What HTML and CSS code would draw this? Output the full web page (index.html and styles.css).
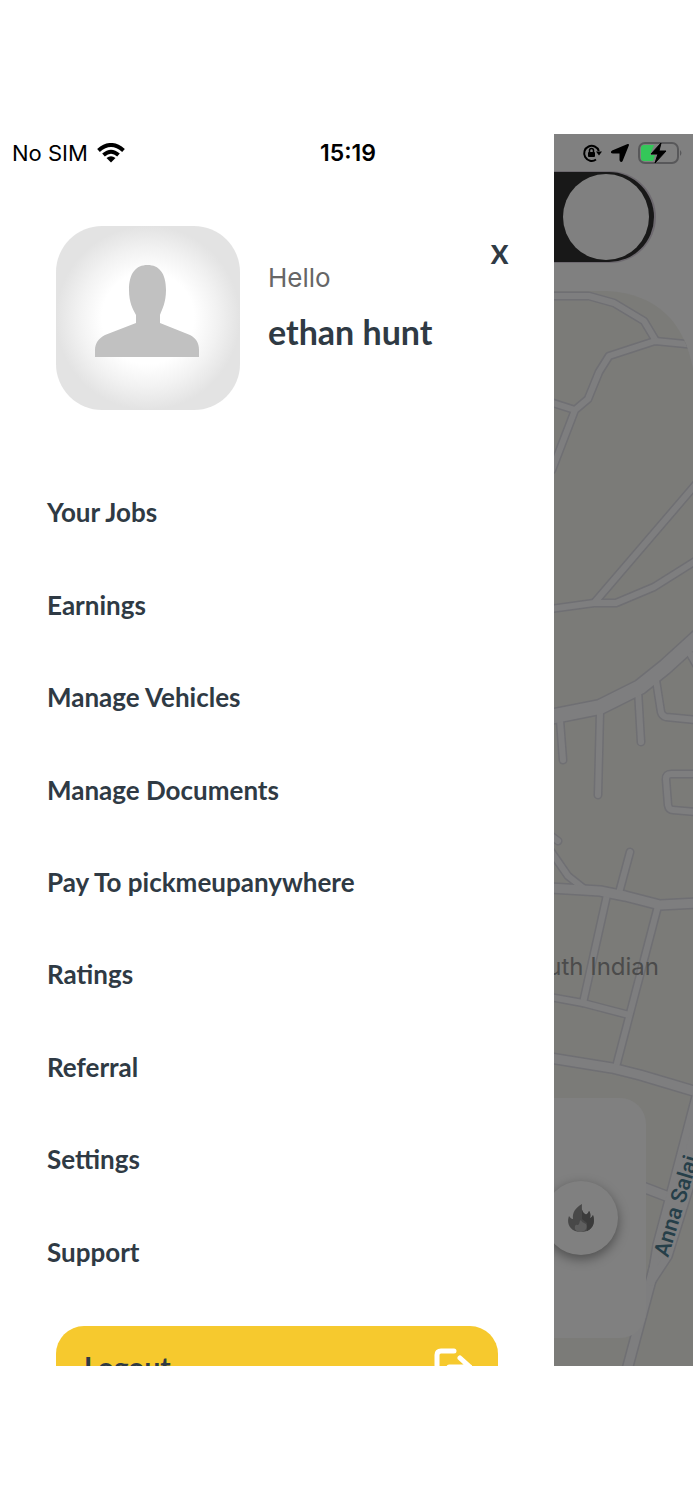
FILE: index.html
```
<!DOCTYPE html>
<html lang="en">
<head>
    <meta charset="UTF-8">
    <meta name="viewport" content="width=device-width, initial-scale=1.0">
    <title>Menu</title>
    <link rel="stylesheet" href="styles.css">
</head>
<body>

<div class="phone">

    <!-- Drawer -->
    <aside class="drawer">
        <header class="profile">
            <svg class="avatar" viewBox="0 0 184 184" aria-hidden="true">
                <defs>
                    <radialGradient id="glow" cx="0.5" cy="0.5" r="0.5">
                        <stop offset="0.5" stop-color="#ffffff"/>
                        <stop offset="0.75" stop-color="#f2f2f2"/>
                        <stop offset="1" stop-color="#e3e3e3"/>
                    </radialGradient>
                </defs>
                <rect width="184" height="184" fill="url(#glow)"/>
                <path fill="#c1c1c1" d="M39 131V124C39 117 43 112 49 109L80 97V89C77 83 73 77 73 64C73 47 80 39 91.500 39C103 39 110 47 110 64C110 77 106 83 104 89V97L134 109C140 112 143 117 143 124V131Z"/>
            </svg>
            <div class="profile-text">
                <p class="hello">Hello</p>
                <h1 class="name">ethan hunt</h1>
            </div>
            <button type="button" class="close" aria-label="Close menu">X</button>
        </header>

        <nav class="menu">
            <a href="#">Your Jobs</a>
            <a href="#">Earnings</a>
            <a href="#">Manage Vehicles</a>
            <a href="#">Manage Documents</a>
            <a href="#">Pay To pickmeupanywhere</a>
            <a href="#">Ratings</a>
            <a href="#">Referral</a>
            <a href="#">Settings</a>
            <a href="#">Support</a>
        </nav>

        <div class="drawer-footer">
            <button type="button" class="logout">
                <span>Logout</span>
                <svg width="38" height="38" viewBox="0 0 38 38" fill="none" stroke="#fff" stroke-width="5" stroke-linecap="round" stroke-linejoin="round" aria-hidden="true">
                    <path d="M20 3H7Q3 3 3 7V31Q3 35 7 35H20M15 19H36M26 10L36 19L26 28"/>
                </svg>
            </button>
        </div>
    </aside>

    <!-- Home screen behind the drawer -->
    <main class="home">
        <svg class="map" viewBox="554 134 139 1232" preserveAspectRatio="xMinYMin slice">
            <defs>
                <clipPath id="mapShape">
                    <path d="M554 291H607C660 294 686 325 694 374V1366H554Z"/>
                </clipPath>
                <g id="streets">
                    <path d="M550 296H589L614 303L644 321L656 341"/>
                    <path d="M696 345L655 341L609 356L599 372L588 399L575 410L550 402M575 410L552 470"/>
                    <path d="M697 483L595 602"/>
                    <path d="M550 609L594 603H616L654 587L697 560"/>
                    <path d="M560 720L563 760M600 712L598 795M638 690L641 742M656 680L661 712Q662 716 666 717L697 720M689 652L697 666"/>
                    <path d="M697 774H671Q666 774 666 779L668 805Q669 810 673 810L697 812"/>
                    <path d="M550 835L558 841M550 850L568 876L587 891"/>
                    <path d="M630 852L619 893M607 895L583 1003M658 906L616 1067"/>
                    <path d="M550 997L583 1003L629 1015"/>
                </g>
                <g id="roads">
                    <path d="M550 888L600 891L625 896L660 905L697 903"/>
                    <path d="M550 1058L612 1068L640 1075L697 1092"/>
                    <path d="M640 1186L674 1199M655 1265L627 1370"/>
                </g>
                <g id="avenue">
                    <path d="M550 717L600 707L640 687L665 667L699 636"/>
                </g>
                <g id="annaSalai">
                    <path d="M699 1085L670 1196L657 1245L651 1282L668 1256L704 1140Z"/>
                </g>
            </defs>
            <g clip-path="url(#mapShape)">
                <rect class="land" x="554" y="134" width="139" height="1232"/>
                <g class="edge">
                    <use href="#streets" stroke-width="9"/>
                    <use href="#roads" stroke-width="12"/>
                    <use href="#avenue" stroke-width="17"/>
                    <use href="#annaSalai" stroke-width="10"/>
                </g>
                <g class="road">
                    <use href="#streets" stroke-width="6"/>
                    <use href="#roads" stroke-width="9"/>
                    <use href="#avenue" stroke-width="14"/>
                    <use href="#annaSalai" stroke-width="7" fill="#7e7e7f"/>
                </g>
                <text class="place" x="659" y="975" text-anchor="end">South Indian</text>
                <text class="street-name" transform="translate(668 1258) rotate(-73)">Anna Salai</text>
            </g>
        </svg>

        <input type="checkbox" class="online-switch" aria-label="Online" checked>

        <section class="heat-card">
            <button type="button" class="heat-button" aria-label="Heat map">
                <svg width="28" height="30" viewBox="0 0 28 30" aria-hidden="true">
                    <path fill="#484848" d="M15 1C8 5 5 10 6 16C4 16 3 14 2 13C0 18 1 25 8 28Q14 30 20 28C27 25 28 18 26 12C25 14 24 15 23 15C24 12 23 9 22 8C21 11 19 12 18 11C15 9 14 5 15 1Z"/>
                    <path fill="#3b3b3b" d="M15 1C14 5 15 9 18 11C19 12 21 11 22 8C23 9 24 12 23 15C24 15 25 14 26 12C28 18 27 25 20 28V20L15 16Z"/>
                    <path fill="#5e5e5e" d="M14 17C15 20 18 20 19 21C21 25 18 29 14 29C10 29 7 27 8 23C9 21 10 22 11 22C13 21 12 18 14 17Z"/>
                </svg>
            </button>
        </section>
    </main>

    <div class="status-bar">
        <div class="status-left">
            <span>No SIM</span>
            <svg width="28" height="20" viewBox="0 0 28 20" fill="none" stroke="#000" stroke-width="4" aria-hidden="true">
                <path d="M1.500 7.500Q14-3.500 26.500 7.500M6.500 12Q14 5.500 21.500 12"/>
                <path fill="#000" stroke="none" d="M9.500 15Q14 11.500 18.500 15L14 19.500Z"/>
            </svg>
        </div>
        <time class="clock">15:19</time>
        <div class="status-right">
            <svg width="20" height="20" viewBox="0 0 20 20" aria-hidden="true">
                <path fill="none" stroke="#000" stroke-width="2" d="M14 16.500A7.500 7.500 0 1 1 16.800 8"/>
                <path d="M14 8.500H20L17 12.500Z"/>
                <rect x="6" y="9" width="7" height="5" rx="1"/>
                <path fill="none" stroke="#000" stroke-width="1.500" d="M7.500 9.500V7.500A2 2 0 0 1 11.500 7.500V9.500"/>
            </svg>
            <svg width="18" height="18" viewBox="0 0 18 18" aria-hidden="true">
                <path d="M17 1L11 16Q10 18 9.500 16V8.500H2Q0 8.500 1.500 7.500Z" stroke="#000" stroke-width="2" stroke-linejoin="round"/>
            </svg>
            <svg width="46" height="24" viewBox="0 0 46 24" aria-hidden="true">
                <rect x="1" y="2" width="39" height="20" rx="6" fill="none" stroke="#58585a" stroke-width="2"/>
                <path fill="#58585a" d="M42 9Q45 12 42 15Z"/>
                <path fill="#34c759" d="M6 4H16L12 14H17L15 20H6Q3 20 3 17V7Q3 4 6 4Z"/>
                <path d="M23 2L13 13H20L17 22L28 10H21Z" stroke="#000" stroke-linejoin="round"/>
            </svg>
        </div>
    </div>
</div>

</body>
</html>
```
FILE: styles.css
```
* {
    box-sizing: border-box;
}
body {
    margin: 0;
    min-height: 100vh;
    display: flex;
    flex-direction: column;
    justify-content: center;
    background-color: #fff;
    font-family: Lato, "Liberation Sans", sans-serif;
    color: #2f3a44;
}
button {
    padding: 0;
    border: none;
    background: none;
    font: inherit;
    color: inherit;
    cursor: pointer;
}
.phone {
    position: relative;
    display: grid;
    grid-template-columns: 4fr 1fr;
    grid-template-rows: 100%;
    aspect-ratio: 9 / 16;
    overflow: hidden;
}

/* Status bar */
.status-bar {
    position: absolute;
    top: 0;
    left: 0;
    right: 0;
    height: 38px;
    padding: 0 9px 0 12px;
    display: grid;
    grid-template-columns: 1fr auto 1fr;
    align-items: center;
    font-family: Inter, sans-serif;
    font-size: 22px;
    color: #000;
}
.status-left, .status-right {
    display: flex;
    align-items: center;
    gap: 9px;
}
.status-right {
    justify-content: flex-end;
}
.clock {
    font-size: 23px;
    font-weight: 600;
}

/* Drawer */
.drawer {
    display: flex;
    flex-direction: column;
    min-height: 0;
    overflow: hidden;
    padding-top: 92px;
}
.profile {
    display: flex;
    gap: 28px;
    padding: 0 46px 0 56px;
}
.avatar {
    width: 184px;
    height: 184px;
    border-radius: 46px;
}
.profile-text {
    flex: 1;
    padding-top: 36px;
}
.hello {
    margin: 0 0 20px;
    font-family: Inter, sans-serif;
    font-size: 26px;
    line-height: 32px;
    color: #666;
}
.name {
    margin: 0;
    font-size: 34px;
    line-height: 36px;
}
.close {
    align-self: flex-start;
    margin-top: 12px;
    font-size: 26px;
    line-height: 32px;
    font-weight: 900;
}
.menu {
    flex: 1;
    display: flex;
    flex-direction: column;
    padding: 56px 47px 28px;
}
.menu a {
    flex: 1;
    display: flex;
    align-items: center;
    font-size: 26px;
    font-weight: 700;
    color: inherit;
    text-decoration: none;
}
.drawer-footer {
    height: 40px;
    padding: 0 56px;
}
.logout {
    width: 100%;
    height: 82px;
    padding: 0 26px 0 28px;
    display: flex;
    align-items: center;
    justify-content: space-between;
    border-radius: 28px;
    background-color: #f6c92e;
    font-size: 28px;
    font-weight: 700;
}

/* Home screen, dimmed */
.home {
    position: relative;
    display: flex;
    flex-direction: column;
    justify-content: space-between;
    overflow: hidden;
    padding: 38px 0 28px;
    background-color: #808080;
}
.map {
    position: absolute;
    top: 0;
    left: 0;
    width: 100%;
    height: 100%;
}
.land {
    fill: #7b7b78;
}
.edge, .road {
    fill: none;
    stroke-linecap: round;
    stroke-linejoin: round;
}
.edge {
    stroke: #6f6f73;
}
.road {
    stroke: #7e7e7f;
}
.place {
    font: 24px Inter, sans-serif;
    fill: #4b4b4b;
}
.street-name {
    font: 500 22px Roboto, sans-serif;
    fill: #263f49;
}
.online-switch {
    appearance: none;
    position: relative;
    width: 150px;
    height: 90px;
    margin: 0 0 0 -50px;
    padding: 2px 5px;
    display: flex;
    justify-content: flex-end;
    border-radius: 45px;
    background-color: #181818;
    box-shadow: 1px 0 0 1px #6e6a70;
}
.online-switch::before {
    content: "";
    width: 86px;
    height: 86px;
    border-radius: 50%;
    background-color: #808080;
}
.heat-card {
    position: relative;
    height: 240px;
    margin-right: 47px;
    display: flex;
    align-items: center;
    border-radius: 0 26px 26px 0;
    background-color: #808080;
}
.heat-button {
    width: 74px;
    height: 74px;
    margin-left: -10px;
    display: flex;
    align-items: center;
    justify-content: center;
    border-radius: 50%;
    background-color: #808080;
    box-shadow: 0 4px 12px rgba(0, 0, 0, 0.4);
}
```
